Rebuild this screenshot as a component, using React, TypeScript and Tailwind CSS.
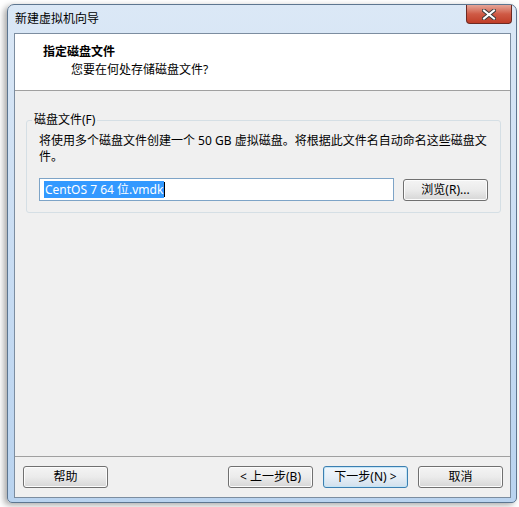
import React from "react";

const font = {
  fontFamily: '"Noto Sans", "Noto Sans CJK SC", sans-serif',
};

const Btn: React.FC<{ label: string; focused?: boolean }> = ({ label, focused }) => (
  <button
    className={
      "h-[22px] w-[85px] rounded-[3px] border text-[12px] leading-none text-black " +
      (focused
        ? "border-[#3c7fb1] bg-gradient-to-b from-[#f1f7fc] via-[#e6eff7] to-[#d2e0ec] shadow-[inset_0_0_0_1px_#c4e5f6]"
        : "border-[#707070] bg-gradient-to-b from-[#f4f4f4] via-[#ebebeb] to-[#d6d6d6] shadow-[inset_0_0_0_1px_#fcfcfc]")
    }
  >
    {label}
  </button>
);

export default function App() {
  return (
    <div className="w-[519px] h-[507px] overflow-hidden bg-white" style={font}>
      <div className="ml-[7px] mt-[4px] w-[510px] h-[499px] flex flex-col rounded-t-[7px] rounded-b-[5px] border border-[#5d7690] bg-gradient-to-b from-[#dbe8f6] via-[#c9ddf3] to-[#b9d3ef] shadow-[-3px_2px_6px_rgba(0,0,0,0.35)]">
        {/* title bar */}
        <div className="h-[28px] flex items-start justify-between">
          <span className="pl-[7px] pt-[6px] text-[12px] leading-[16px] text-black">新建虚拟机向导</span>
          <div className="mr-[4px] w-[46px] h-[19px] rounded-b-[4px] border border-t-0 border-[#6d2a23] bg-gradient-to-b from-[#e5a598] via-[#cf5a45] to-[#c03d27] flex items-center justify-center">
            <svg width="14" height="11" viewBox="0 0 14 11">
              <path d="M2 1.5 L12 9.5 M12 1.5 L2 9.5" stroke="#3b3b3b" strokeWidth="4" strokeLinecap="square" />
              <path d="M2 1.5 L12 9.5 M12 1.5 L2 9.5" stroke="#ffffff" strokeWidth="2" strokeLinecap="square" />
            </svg>
          </div>
        </div>
        {/* client area */}
        <div className="mx-[6px] w-[497px] h-[465px] flex flex-col border border-[#7c8da0] bg-[#f0f0f0]">
          {/* header */}
          <div className="h-[57px] bg-white border-b border-[#a0a0a0] pl-[28px] pt-[10px]">
            <div className="text-[12px] leading-[16px] font-bold text-black">指定磁盘文件</div>
            <div className="pl-[28px] pt-[2px] text-[12px] leading-[16px] text-black">您要在何处存储磁盘文件?</div>
          </div>
          {/* body */}
          <div className="flex-1 px-[11px] pt-[29px]">
            <div className="relative w-[475px] h-[93px] rounded-[3px] border border-[#d5dfe5] pl-[12px] pr-[12px] pt-[12px]">
              <span className="absolute left-[5px] top-[-9px] bg-[#f0f0f0] px-[2px] text-[12px] leading-[16px] text-black">
                磁盘文件(F)
              </span>
              <p className="text-[12px] leading-[16px] text-black">
                将使用多个磁盘文件创建一个 50 GB 虚拟磁盘。将根据此文件名自动命名这些磁盘文件。
              </p>
              <div className="mt-[13px] flex items-center gap-[9px]">
                <div className="w-[355px] h-[23px] border border-[#7ea4c7] bg-white flex items-center pl-[4px]">
                  <span className="bg-[#3399ff] text-white text-[12px] leading-[17px] px-[1px]">CentOS 7 64 位.vmdk</span>
                  <span className="w-[1px] h-[15px] bg-black" />
                </div>
                <Btn label="浏览(R)..." />
              </div>
            </div>
          </div>
          {/* footer */}
          <div className="h-[41px] border-t border-[#a0a0a0] flex items-start pt-[9px] pl-[8px] pr-[7px]">
            <Btn label="帮助" />
            <div className="flex-1" />
            <div className="flex gap-[10px]">
              <Btn label="< 上一步(B)" />
              <Btn label="下一步(N) >" focused />
              <Btn label="取消" />
            </div>
          </div>
        </div>
      </div>
    </div>
  );
}
